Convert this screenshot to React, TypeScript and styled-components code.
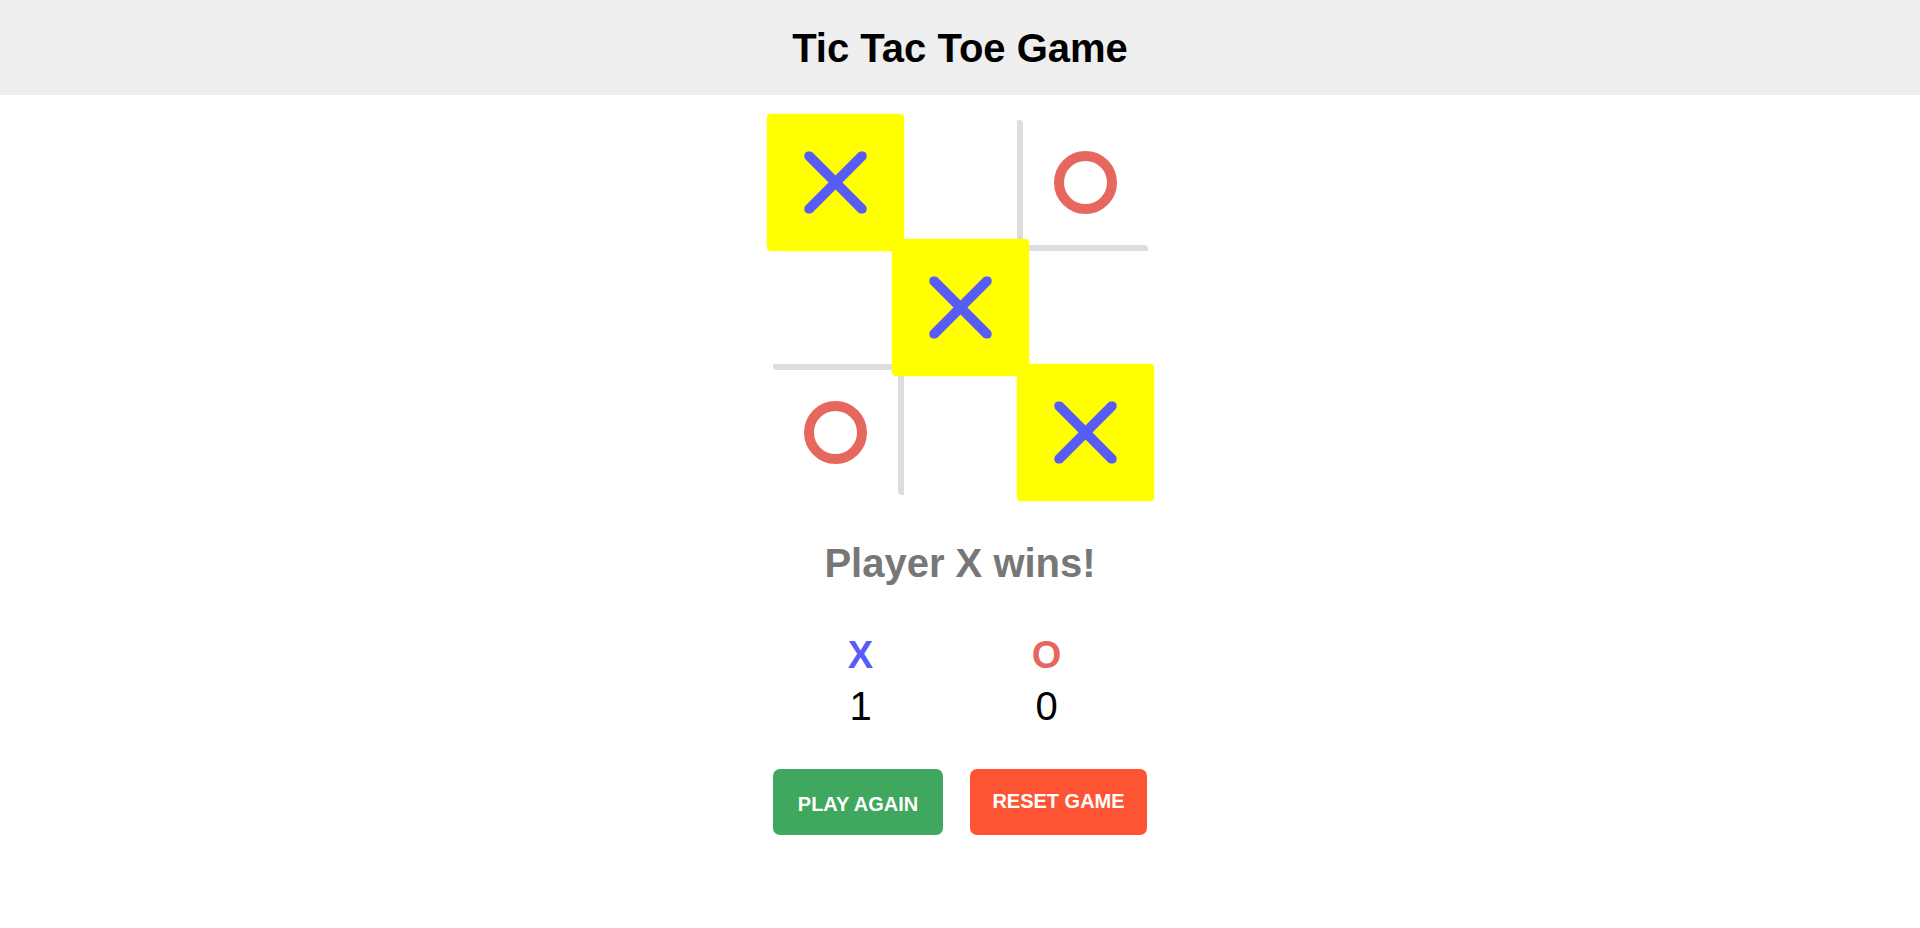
import {useState} from "react";
import styled, {createGlobalStyle} from "styled-components";

type Mark = "X" | "O" | null;

// Colours used across the board and the score
const BLUE = "#575cf6";
const RED = "#e6675e";

const GlobalStyle = createGlobalStyle`
  body {
    margin: 0;
    background: #ffffff;
    font-family: "Liberation Sans", Arial, sans-serif;
  }
`;

const Header = styled.header`
  height: 95px;
  display: flex;
  align-items: center;
  justify-content: center;
  background-color: #eeeeee;
`;

const Title = styled.h1`
  margin: 0;
  font-size: 40px;
  line-height: 46px;
  font-weight: bold;
  color: #000000;
`;

const Main = styled.main`
  display: flex;
  flex-direction: column;
  align-items: center;
`;

const Board = styled.div`
  margin-top: 25px;
  display: grid;
  grid-template-columns: repeat(3, 125px);
  grid-template-rows: repeat(3, 125px);
`;

const Cell = styled.div<{$row: number; $col: number; $win: boolean}>`
  box-sizing: border-box;
  width: 125px;
  height: 125px;
  display: flex;
  align-items: center;
  justify-content: center;
  border-radius: 4px;
  border: 0 solid #dddddd;
  border-left-width: ${(p) => (p.$col === 1 ? "6px" : "0")};
  border-right-width: ${(p) => (p.$col === 1 ? "6px" : "0")};
  border-top-width: ${(p) => (p.$row === 1 ? "6px" : "0")};
  border-bottom-width: ${(p) => (p.$row === 1 ? "6px" : "0")};
  cursor: pointer;
  ${(p) =>
    p.$win &&
    `
    background-color: #ffff00;
    border-color: #ffff00;
    transform: scale(1.1);
  `}
`;

const Status = styled.h2`
  margin: 45px 0 0;
  font-size: 40px;
  line-height: 46px;
  font-weight: bold;
  color: #777777;
`;

const ScoreBoard = styled.div`
  margin: 47px 13px 0 0;
  display: flex;
  gap: 86px;
`;

const Score = styled.div`
  width: 100px;
  text-align: center;
`;

const ScoreLabel = styled.div<{$color: string}>`
  font-size: 38px;
  line-height: 44px;
  font-weight: bold;
  color: ${(p) => p.$color};
  margin-bottom: 6px;
`;

const ScoreValue = styled.div`
  font-size: 40px;
  line-height: 46px;
  color: #000000;
`;

const Buttons = styled.div`
  margin-top: 40px;
  display: flex;
  gap: 27px;
`;

const Button = styled.button<{$bg: string; $top: number; $width: number}>`
  box-sizing: border-box;
  width: ${(p) => p.$width}px;
  padding: ${(p) => p.$top}px 0 ${(p) => 43 - p.$top}px;
  border: none;
  border-radius: 7px;
  background-color: ${(p) => p.$bg};
  color: #ffffff;
  font-family: "Liberation Sans", Arial, sans-serif;
  font-size: 20px;
  line-height: 23px;
  font-weight: bold;
  text-transform: uppercase;
  text-align: center;
  cursor: pointer;
`;

const XMark = () => (
  <svg width="57" height="57" viewBox="0 0 57 57">
    <g stroke={BLUE} strokeWidth="9" strokeLinecap="round">
      <line x1="4.5" y1="4.5" x2="52.5" y2="52.5" />
      <line x1="52.5" y1="4.5" x2="4.5" y2="52.5" />
    </g>
  </svg>
);

const OMark = () => (
  <svg width="63" height="63" viewBox="0 0 63 63">
    <circle cx="31.5" cy="31.5" r="26.5" fill="none" stroke={RED} strokeWidth="10" />
  </svg>
);

const LINES = [
  [0, 1, 2], [3, 4, 5], [6, 7, 8],
  [0, 3, 6], [1, 4, 7], [2, 5, 8],
  [0, 4, 8], [2, 4, 6],
];

const findWinner = (squares: Mark[]) => {
  for (const [a, b, c] of LINES) {
    if (squares[a] && squares[a] === squares[b] && squares[a] === squares[c]) {
      return {player: squares[a], line: [a, b, c]};
    }
  }
  return null;
};

export default function App() {
  const [squares, setSquares] = useState<Mark[]>(["X", null, "O", null, "X", null, "O", null, "X"]);
  const [scores, setScores] = useState({X: 1, O: 0});
  const [next, setNext] = useState<"X" | "O">("O");

  const winner = findWinner(squares);

  const play = (i: number) => {
    if (squares[i] || winner) return;
    const copy = [...squares];
    copy[i] = next;
    const won = findWinner(copy);
    if (won && won.player) {
      setScores((s) => ({...s, [won.player as string]: s[won.player as "X" | "O"] + 1}));
    }
    setSquares(copy);
    setNext(next === "X" ? "O" : "X");
  };

  const playAgain = () => {
    setSquares(Array(9).fill(null));
    setNext("X");
  };

  const resetGame = () => {
    playAgain();
    setScores({X: 0, O: 0});
  };

  return (
    <>
      <GlobalStyle />
      <Header>
        <Title>Tic Tac Toe Game</Title>
      </Header>
      <Main>
        <Board>
          {squares.map((mark, i) => (
            <Cell
              key={i}
              $row={Math.floor(i / 3)}
              $col={i % 3}
              $win={!!winner && winner.line.includes(i)}
              onClick={() => play(i)}
            >
              {mark === "X" && <XMark />}
              {mark === "O" && <OMark />}
            </Cell>
          ))}
        </Board>

        <Status>{winner ? `Player ${winner.player} wins!` : `Player ${next}'s turn`}</Status>

        <ScoreBoard>
          <Score>
            <ScoreLabel $color={BLUE}>X</ScoreLabel>
            <ScoreValue>{scores.X}</ScoreValue>
          </Score>
          <Score>
            <ScoreLabel $color={RED}>O</ScoreLabel>
            <ScoreValue>{scores.O}</ScoreValue>
          </Score>
        </ScoreBoard>

        <Buttons>
          <Button $bg="#40a75e" $top={24} $width={170} onClick={playAgain}>Play Again</Button>
          <Button $bg="#ff5433" $top={21} $width={177} onClick={resetGame}>Reset Game</Button>
        </Buttons>
      </Main>
    </>
  );
}
